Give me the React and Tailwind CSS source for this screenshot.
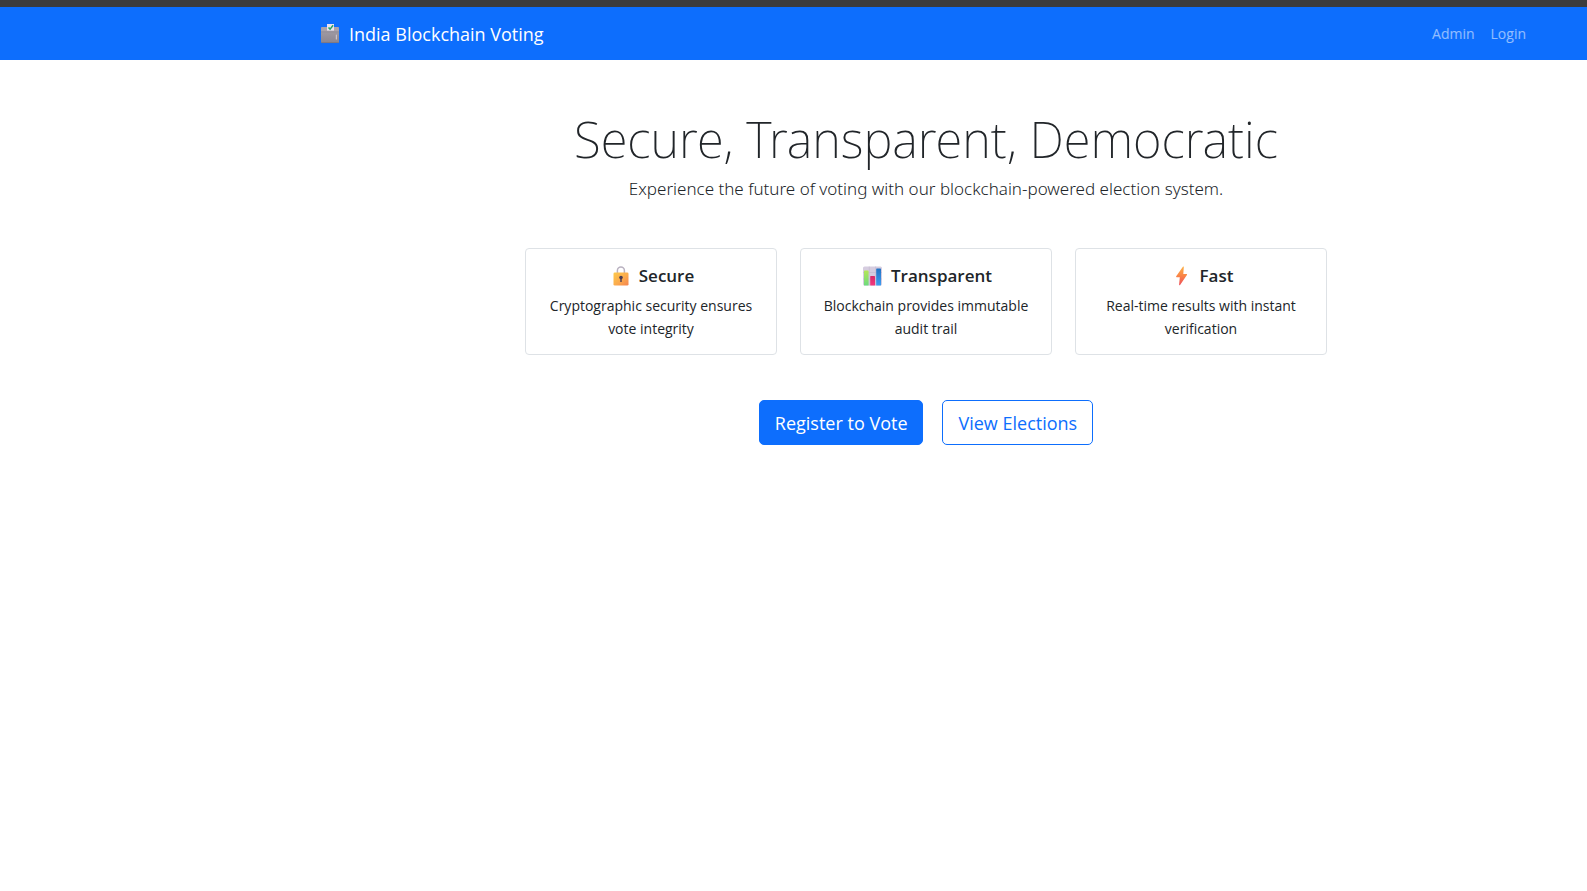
const iconClass = "h-5 w-[25px] shrink-0";

function BallotIcon() {
  return (
    <svg className={iconClass} viewBox="0 0 25 20" aria-hidden="true">
      <defs>
        <linearGradient id="ballot-box" x1="0" y1="0" x2="0" y2="1">
          <stop offset="0" stopColor="#a6a1ab" />
          <stop offset="1" stopColor="#8b8690" />
        </linearGradient>
      </defs>
      <rect x="3" y="3" width="18" height="16" rx="1" fill="url(#ballot-box)" />
      <path d="M3.8 3h16.4l.8 4H3z" fill="#aaa4ac" />
      <path d="M3 8h18" stroke="#8f8994" strokeWidth=".6" />
      <path d="M9 0h7v6.6H9z" fill="#e9e3f0" />
      <path d="m10.5 3.4 1.6 1.7 3-3.8" fill="none" stroke="#23a566" strokeWidth="1.5" />
      <path d="M18.4 11v4" stroke="#c9c4cc" strokeWidth="1.2" strokeLinecap="round" />
      <path d="M3.4 18.6h17.2" stroke="#77717c" strokeWidth=".7" />
    </svg>
  );
}

function LockIcon() {
  return (
    <svg className={iconClass} viewBox="0 0 25 20" aria-hidden="true">
      <defs>
        <linearGradient id="lock-body" x1="0" y1="0" x2="1" y2="1">
          <stop offset="0" stopColor="#fdc94b" />
          <stop offset=".55" stopColor="#fbab4d" />
          <stop offset="1" stopColor="#f5834f" />
        </linearGradient>
      </defs>
      <path d="M9.4 8V4.6a3.5 3.5 0 0 1 7 0V8" fill="none" stroke="#b9b1c0" strokeWidth="1.5" />
      <rect x="5.5" y="6.5" width="15" height="13" rx="1.3" fill="url(#lock-body)" />
      <circle cx="13" cy="11.6" r="1.8" fill="#4a3b52" />
      <path d="M12.3 12h1.4v4h-1.4z" fill="#4a3b52" />
    </svg>
  );
}

function ChartIcon() {
  return (
    <svg className={iconClass} viewBox="0 0 25 20" aria-hidden="true">
      <defs>
        <linearGradient id="bar-green" x1="0" y1="0" x2="0" y2="1">
          <stop offset="0" stopColor="#b5e656" />
          <stop offset="1" stopColor="#6cdb7d" />
        </linearGradient>
        <linearGradient id="bar-pink" x1="0" y1="0" x2="0" y2="1">
          <stop offset="0" stopColor="#d92a68" />
          <stop offset="1" stopColor="#f2397f" />
        </linearGradient>
        <linearGradient id="bar-blue" x1="0" y1="0" x2="0" y2="1">
          <stop offset="0" stopColor="#2273c4" />
          <stop offset="1" stopColor="#3f9df0" />
        </linearGradient>
      </defs>
      <rect x="3" y=".5" width="19" height="19" rx="1.5" fill="#d6cde0" />
      <path d="M3 6.5h19M3 13h19M9.3.5v19M15.6.5v19" stroke="#c6bcd1" strokeWidth=".7" />
      <rect x="4" y="4.5" width="4.6" height="15" rx=".6" fill="url(#bar-green)" />
      <rect x="10.2" y="10" width="4.8" height="9.5" rx=".6" fill="url(#bar-pink)" />
      <rect x="16.2" y="2.5" width="4.8" height="17" rx=".6" fill="url(#bar-blue)" />
    </svg>
  );
}

function BoltIcon() {
  return (
    <svg className={iconClass} viewBox="0 0 25 20" aria-hidden="true">
      <defs>
        <linearGradient id="bolt" x1="0" y1="0" x2="0" y2="1">
          <stop offset="0" stopColor="#fcb045" />
          <stop offset=".5" stopColor="#f98446" />
          <stop offset="1" stopColor="#ee4f5c" />
        </linearGradient>
      </defs>
      <path d="M13.9.7 7.2 10.3c-.3.5-.1.9.4.9h3.2l-.7 7.3c-.1.7.6.9 1 .4l6.8-10c.3-.5.1-.9-.4-.9h-3.2l.5-6.9c.1-.7-.5-.9-.9-.4z" fill="url(#bolt)" />
    </svg>
  );
}

const features = [
  { title: "Secure", text: "Cryptographic security ensures vote integrity", Icon: LockIcon },
  { title: "Transparent", text: "Blockchain provides immutable audit trail", Icon: ChartIcon },
  { title: "Fast", text: "Real-time results with instant verification", Icon: BoltIcon },
];

export default function App() {
  return (
    <div className="min-h-screen bg-white font-['Open_Sans','Noto_Sans',sans-serif] text-sm text-[#212529]">
      <div className="h-[7px] bg-[#3c3c3c]" />
      <header className="bg-[#0d6efd] pl-[265px]">
        <nav className="flex h-[53px] items-center justify-between px-[53px]">
          <a href="#home" className="flex items-center gap-[6px] text-lg leading-6 text-white">
            <BallotIcon />
            India Blockchain Voting
          </a>
          <div className="flex text-white/55">
            <a href="#admin" className="px-2">Admin</a>
            <a href="#login" className="px-2">Login</a>
          </div>
        </nav>
      </header>

      <main className="pl-[265px] pt-[50px] text-center">
        <div className="mx-auto max-w-[802px]">
          <h1 className="mb-2 font-['Noto_Sans','Open_Sans',sans-serif] text-[49px] leading-[58px] font-extralight">
            Secure, Transparent, Democratic
          </h1>
          <p className="font-['Noto_Sans','Open_Sans',sans-serif] text-[17px] leading-[26px] font-light">
            Experience the future of voting with our blockchain-powered election system.
          </p>

          <section className="mt-[46px] grid grid-cols-3 gap-[23px]">
            {features.map(({ title, text, Icon }) => (
              <article key={title} className="rounded border border-[#dee2e6] px-4 pt-4 pb-[14px]">
                <h2 className="mb-2 flex items-center justify-center gap-[6px] text-[17px] leading-[21px] font-semibold">
                  <Icon />
                  {title}
                </h2>
                <p className="leading-[23px]">{text}</p>
              </article>
            ))}
          </section>

          <div className="mt-[45px] flex justify-center gap-[19px] text-lg">
            <a href="#register" className="flex h-[45px] items-center rounded-[5px] border border-[#0d6efd] bg-[#0d6efd] px-[15px] text-white">
              Register to Vote
            </a>
            <a href="#elections" className="flex h-[45px] items-center rounded-[5px] border border-[#0d6efd] px-[15px] text-[#0d6efd]">
              View Elections
            </a>
          </div>
        </div>
      </main>
    </div>
  );
}
